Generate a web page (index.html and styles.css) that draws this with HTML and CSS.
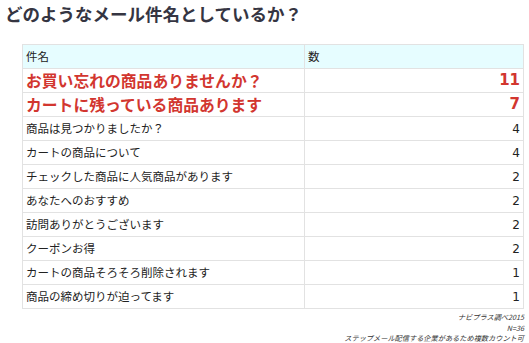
FILE: index.html
```html
<!DOCTYPE html>
<html lang="ja">
<head>
<meta charset="utf-8">
<link rel="stylesheet" href="styles.css">
</head>
<body>
<h1 class="title">どのようなメール件名としているか？</h1>
<table class="tbl">
  <thead>
    <tr><th class="c-name">件名</th><th class="c-num">数</th></tr>
  </thead>
  <tbody>
    <tr class="hl"><td>お買い忘れの商品ありませんか？</td><td class="num">11</td></tr>
    <tr class="hl"><td>カートに残っている商品あります</td><td class="num">7</td></tr>
    <tr><td>商品は見つかりましたか？</td><td class="num">4</td></tr>
    <tr><td>カートの商品について</td><td class="num">4</td></tr>
    <tr><td>チェックした商品に人気商品があります</td><td class="num">2</td></tr>
    <tr><td>あなたへのおすすめ</td><td class="num">2</td></tr>
    <tr><td>訪問ありがとうございます</td><td class="num">2</td></tr>
    <tr><td>クーポンお得</td><td class="num">2</td></tr>
    <tr><td>カートの商品そろそろ削除されます</td><td class="num">1</td></tr>
    <tr><td>商品の締め切りが迫ってます</td><td class="num">1</td></tr>
  </tbody>
</table>
<div class="note">
  <div>ナビプラス調べ2015</div>
  <div>N=36</div>
  <div>ステップメール配信する企業があるため複数カウント可</div>
</div>
</body>
</html>
```
FILE: styles.css
```css
html, body {
  margin: 0;
  padding: 0;
  background: #fff;
}
body {
  font-family: "Noto Sans CJK JP", "Noto Sans", sans-serif;
  color: #333;
  width: 529px;
}
.title {
  margin: 0;
  padding-left: 5px;
  font-size: 17.5px;
  line-height: 28px;
  font-weight: bold;
  color: #353542;
}
.tbl {
  margin: 16px 0 0 22px;
  width: 502px;
  border-collapse: collapse;
  table-layout: fixed;
}
.tbl th, .tbl td {
  border: 1px solid #e2e2e2;
  height: 23px;
  padding: 0 3px;
  font-size: 11.5px;
  font-weight: normal;
  text-align: left;
  vertical-align: middle;
  color: #222;
  line-height: 1;
}
.tbl th {
  background: #e6fdff;
}
.c-name { width: 275px; }
.tbl td.num {
  text-align: right;
  font-family: "DejaVu Sans", "Noto Sans", sans-serif;
  font-size: 12px;
  padding-right: 3px;
}
.tbl tr.hl td {
  color: #d2362f;
  font-weight: bold;
  font-size: 15.8px;
}
.tbl tr.hl td.num {
  font-size: 15px;
  font-family: "DejaVu Sans", "Noto Sans", sans-serif;
}
.note {
  margin-top: 3px;
  width: 524px;
  text-align: right;
  font-size: 7.2px;
  line-height: 10.5px;
  font-style: italic;
  color: #333;
}
```
